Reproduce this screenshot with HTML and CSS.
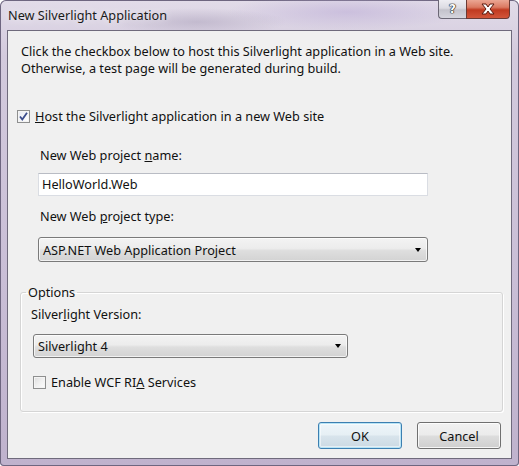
FILE: index.html
```html
<!DOCTYPE html>
<html lang="en">
<head>
  <meta charset="UTF-8" />
  <title>New Silverlight Application</title>
  <link rel="stylesheet" href="styles.css">
</head>
<body>

  <div class="window">

    <!-- Title Bar -->
    <div class="titlebar">
      <span class="title">New Silverlight Application</span>
      <div class="caption-buttons">
        <span class="cap-help">?</span>
        <span class="cap-close">
          <svg width="16" height="12" viewBox="0 0 16 12">
            <path d="M2 1 H6 L8 4 L10 1 H14 L10 6 L14 11 H10 L8 8 L6 11 H2 L6 6 Z" fill="#fff" stroke="#5a1a10" stroke-width="1" stroke-linejoin="round"/>
          </svg>
        </span>
      </div>
    </div>

    <!-- Dialog Body -->
    <div class="client">
      <p class="intro">
        Click the checkbox below to host this Silverlight application in a Web site.<br>
        Otherwise, a test page will be generated during build.
      </p>

      <div class="check-row host">
        <span class="box checked">
          <svg width="13" height="13" viewBox="0 0 13 13">
            <path d="M3 6.5 L5.3 9.5 L10 2.8" fill="none" stroke="#3b4d8c" stroke-width="1.8"/>
          </svg>
        </span>
        <span><u>H</u>ost the Silverlight application in a new Web site</span>
      </div>

      <div class="web-fields">
        <div class="field-label">New Web project <u>n</u>ame:</div>
        <div class="textbox">HelloWorld.Web</div>
        <div class="field-label">New Web <u>p</u>roject type:</div>
        <div class="combo wide">
          <span>ASP.NET Web Application Project</span>
          <span class="arrow"></span>
        </div>
      </div>

      <fieldset class="options">
        <legend>Options</legend>
        <div class="field-label">Silver<u>l</u>ight Version:</div>
        <div class="combo narrow">
          <span>Silverlight 4</span>
          <span class="arrow"></span>
        </div>
        <div class="check-row ria">
          <span class="box"></span>
          <span>Enable WCF RI<u>A</u> Services</span>
        </div>
      </fieldset>

      <div class="buttons">
        <button class="ok">OK</button>
        <button>Cancel</button>
      </div>
    </div>

  </div>

</body>
</html>
```

FILE: styles.css
```css
body {
  margin: 0;
  padding: 0;
  overflow: hidden;
  font-family: 'Noto Sans', 'Open Sans', sans-serif;
  font-size: 12.7px;
  color: #111;
  background-color: #fff;
}

.window {
  width: 519px;
  height: 466px;
  box-sizing: border-box;
  padding: 0 7px 7px 7px;
  display: flex;
  flex-direction: column;
  border-radius: 6px 6px 4px 4px;
  box-shadow: inset 0 0 0 1px #6e6680;
  background: linear-gradient(180deg, #e2dce9 0%, #d3cadd 12%, #c9bed6 60%, #bfb2cd 100%);
}

/* Title Bar */
.titlebar {
  height: 30px;
  display: flex;
  align-items: flex-start;
  background: radial-gradient(ellipse 90px 14px at 190px 22px, rgba(170, 160, 185, 0.5), transparent),
              radial-gradient(ellipse 120px 18px at 340px 12px, rgba(190, 175, 215, 0.6), transparent);
}

.title {
  margin-left: 1px;
  line-height: 30px;
  color: #1a1a1a;
  text-shadow: 0 0 8px rgba(255, 255, 255, 0.9);
}

.caption-buttons {
  margin-left: auto;
  margin-right: 2px;
  display: flex;
  height: 20px;
}

.cap-help {
  width: 28px;
  height: 19px;
  box-sizing: border-box;
  border: 1px solid #6b6775;
  border-top: none;
  border-right: none;
  border-radius: 0 0 0 4px;
  background: linear-gradient(180deg, #eeedf2 0%, #dcdbe2 45%, #c3c2cb 55%, #d6d5de 100%);
  text-align: center;
  font-family: 'DejaVu Sans', sans-serif;
  font-weight: bold;
  font-size: 12px;
  line-height: 18px;
  color: #fff;
  text-shadow: 0 0 1px #222, 0 0 1px #222, 0 0 1px #222, 0 0 1px #222;
}

.cap-close {
  width: 44px;
  height: 19px;
  box-sizing: border-box;
  border: 1px solid #6b3a34;
  border-top: none;
  border-radius: 0 0 4px 0;
  background: linear-gradient(180deg, #eba693 0%, #db7a62 40%, #c03a20 55%, #d2553a 100%);
  display: flex;
  align-items: center;
  justify-content: center;
}

/* Dialog Body */
.client {
  flex: 1;
  background-color: #f0f0f0;
  border: 1px solid #6f6a7c;
  display: flex;
  flex-direction: column;
}

.intro {
  margin: 0;
  padding: 12px 0 0 13px;
  line-height: 17px;
}

.check-row {
  display: flex;
  align-items: center;
  height: 15px;
  line-height: 15px;
}

.check-row.host {
  margin-top: 32px;
  margin-left: 9px;
}

.box {
  width: 13px;
  height: 13px;
  box-sizing: border-box;
  border: 1px solid #8e8f8f;
  background: linear-gradient(135deg, #dcdcdc 0%, #f0f0f0 50%, #fdfdfd 100%);
  box-shadow: inset 0 0 0 1px #f4f4f4;
  margin-right: 5px;
  position: relative;
}

.box.checked {
  background: linear-gradient(135deg, #e4e8f2 0%, #f6f7fa 60%, #ffffff 100%);
}

.box svg {
  position: absolute;
  left: -1px;
  top: -1px;
}

.web-fields {
  margin-left: 30px;
  display: flex;
  flex-direction: column;
}

.field-label {
  line-height: 15px;
  padding-left: 2px;
  margin-top: 24px;
}

.web-fields .field-label + .combo {
  margin-top: 13px;
}

.web-fields .textbox + .field-label {
  margin-top: 13px;
}

.textbox {
  margin-top: 10px;
  width: 390px;
  height: 23px;
  box-sizing: border-box;
  padding-left: 3px;
  line-height: 21px;
  background-color: #fff;
  border: 1px solid #dadde3;
  border-top-color: #b9bcc4;
}

.combo {
  box-sizing: border-box;
  display: flex;
  align-items: center;
  padding: 0 6px 0 4px;
  border: 1px solid #7a7a7a;
  border-radius: 3px;
  background: linear-gradient(180deg, #f3f3f3 0%, #ececec 45%, #dedede 55%, #d3d3d3 100%);
  box-shadow: inset 0 0 0 1px rgba(255, 255, 255, 0.7);
}

.combo.wide {
  width: 390px;
  height: 25px;
}

.combo.narrow {
  width: 315px;
  height: 24px;
  margin-top: 12px;
  margin-left: 2px;
}

.combo .arrow {
  margin-left: auto;
  width: 0;
  height: 0;
  border-left: 3.5px solid transparent;
  border-right: 3.5px solid transparent;
  border-top: 4px solid #000;
}

/* Options Group */
.options {
  margin: 23px 8px 0 12px;
  padding: 0 0 21px 10px;
  border: 1px solid #d5d5d5;
  border-radius: 3px;
  box-shadow: inset 1px 1px 0 #fff, 1px 1px 0 #fff;
  min-width: 0;
}

.options legend {
  margin-left: -5px;
  padding: 0 2px;
  line-height: 15px;
}

.options .field-label {
  margin-top: 7px;
  padding-left: 0;
}

.check-row.ria {
  margin-top: 17px;
  margin-left: 2px;
}

/* Buttons */
.buttons {
  display: flex;
  justify-content: flex-end;
  gap: 15px;
  margin-top: 10px;
  padding-right: 10px;
}

button {
  width: 84px;
  height: 27px;
  font-family: inherit;
  font-size: inherit;
  color: #111;
  border: 1px solid #707070;
  border-radius: 3px;
  background: linear-gradient(180deg, #f2f2f2 0%, #ebebeb 48%, #dddddd 52%, #cfcfcf 100%);
  box-shadow: inset 0 0 0 1px rgba(255, 255, 255, 0.8);
  padding: 0;
}

button.ok {
  border-color: #3c7fb1;
  box-shadow: inset 0 0 0 1px #b8e4f6, inset 0 0 0 2px rgba(255, 255, 255, 0.5);
  background: linear-gradient(180deg, #eef6fa 0%, #e6eff4 48%, #d8e4ec 52%, #cbd9e3 100%);
}
```
